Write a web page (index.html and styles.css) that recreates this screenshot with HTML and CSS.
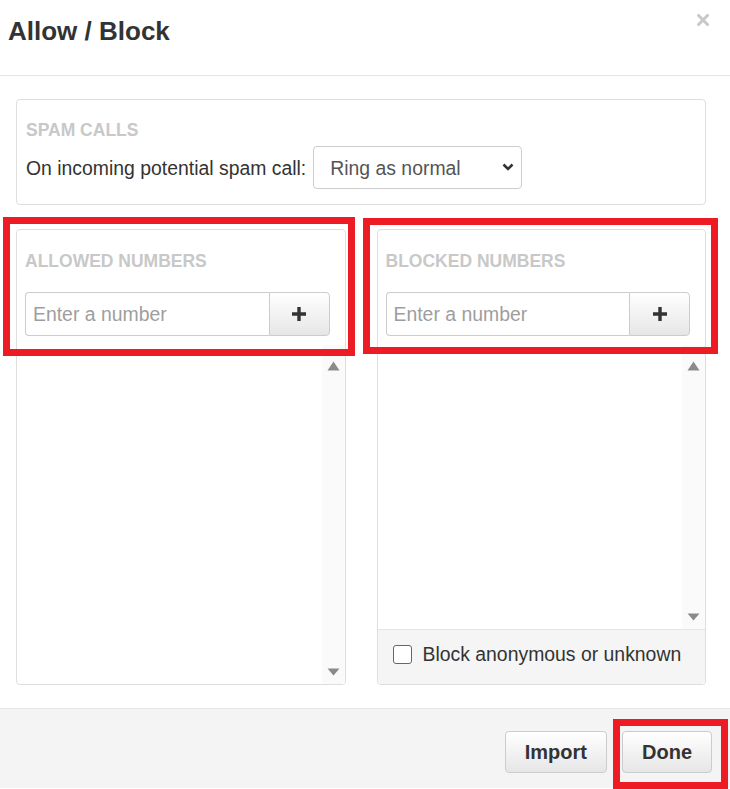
FILE: index.html
```html
<!DOCTYPE html>
<html lang="en">

<head>
    <meta charset="UTF-8">
    <meta name="viewport" content="width=device-width, initial-scale=1">
    <title>Allow / Block</title>
    <link rel="stylesheet" href="styles.css">
</head>

<body>
    <div class="dialog">
        <div class="dialoghead">
            <h2 class="dialogtitle">Allow / Block</h2>
            <button class="closebtn" type="button" aria-label="Close">
                <svg width="12" height="12" viewBox="0 0 12 12">
                    <path d="M1.5 1.5 L10.5 10.5 M10.5 1.5 L1.5 10.5" stroke="#c9c9c9" stroke-width="3" stroke-linecap="square" />
                </svg>
            </button>
        </div>

        <div class="dialogbody">
            <section class="box spambox">
                <h3 class="boxlabel">SPAM CALLS</h3>
                <div class="spamrow">
                    <label for="spamaction">On incoming potential spam call:</label>
                    <div class="selectwrap">
                        <select id="spamaction">
                            <option>Ring as normal</option>
                            <option>Send to voicemail</option>
                            <option>Block</option>
                        </select>
                        <svg class="chevron" width="12" height="8" viewBox="0 0 12 8">
                            <path d="M1.5 1.5 L6 6 L10.5 1.5" fill="none" stroke="#333" stroke-width="2.6" />
                        </svg>
                    </div>
                </div>
            </section>

            <div class="lists">
                <section class="box listbox">
                    <div class="listhead">
                        <h3 class="boxlabel">ALLOWED NUMBERS</h3>
                        <form class="addgroup" action="javascript:;">
                            <input type="text" placeholder="Enter a number" name="number">
                            <button type="submit" class="addbtn" aria-label="Add">
                                <svg width="16" height="16" viewBox="0 0 16 16">
                                    <path d="M8 1 V15 M1 8 H15" stroke="#333" stroke-width="3.4" />
                                </svg>
                            </button>
                        </form>
                    </div>
                    <div class="numberlist">
                        <div class="listitems"></div>
                        <div class="scrolltrack">
                            <svg width="13" height="10" viewBox="0 0 13 10"><path d="M6.5 0.5 L12.5 9.5 H0.5 Z" fill="#8a8a8a" /></svg>
                            <svg width="13" height="8" viewBox="0 0 13 8"><path d="M0.5 0.5 H12.5 L6.5 7.5 Z" fill="#8a8a8a" /></svg>
                        </div>
                    </div>
                </section>

                <section class="box listbox">
                    <div class="listhead">
                        <h3 class="boxlabel">BLOCKED NUMBERS</h3>
                        <form class="addgroup" action="javascript:;">
                            <input type="text" placeholder="Enter a number" name="number">
                            <button type="submit" class="addbtn" aria-label="Add">
                                <svg width="16" height="16" viewBox="0 0 16 16">
                                    <path d="M8 1 V15 M1 8 H15" stroke="#333" stroke-width="3.4" />
                                </svg>
                            </button>
                        </form>
                    </div>
                    <div class="numberlist">
                        <div class="listitems"></div>
                        <div class="scrolltrack">
                            <svg width="13" height="10" viewBox="0 0 13 10"><path d="M6.5 0.5 L12.5 9.5 H0.5 Z" fill="#8a8a8a" /></svg>
                            <svg width="13" height="8" viewBox="0 0 13 8"><path d="M0.5 0.5 H12.5 L6.5 7.5 Z" fill="#8a8a8a" /></svg>
                        </div>
                    </div>
                    <label class="listfoot">
                        <input type="checkbox" class="check">
                        <span>Block anonymous or unknown</span>
                    </label>
                </section>
            </div>
        </div>

        <div class="dialogfoot">
            <button type="button" class="btn">Import</button>
            <button type="button" class="btn">Done</button>
        </div>
    </div>

    <div class="marker marker-allowed"></div>
    <div class="marker marker-blocked"></div>
    <div class="marker marker-done"></div>
</body>

</html>
```

FILE: styles.css
```css
body {
    margin: 0;
    background-color: #fff;
    font-family: 'Liberation Sans', Arial, sans-serif;
    color: #333;
}

.dialoghead {
    display: flex;
    justify-content: space-between;
    align-items: flex-start;
    height: 59px;
    padding: 16px 21px 0 8px;
    border-bottom: 1px solid #e5e5e5;
}

.dialogtitle {
    margin: 0;
    font-size: 26px;
    line-height: 30px;
    font-weight: bold;
    color: #333;
}

.closebtn {
    background: none;
    border: 0;
    padding: 0;
    margin-top: -2px;
    cursor: pointer;
}

.closebtn svg {
    display: block;
}

.dialogbody {
    padding: 23px 24px 23px 16px;
}

.box {
    border: 1px solid #dedede;
    border-radius: 4px;
    box-sizing: border-box;
}

.boxlabel {
    margin: 0;
    font-size: 17.5px;
    line-height: 20px;
    font-weight: bold;
    color: #c8c8c8;
}

.spambox {
    height: 106px;
    padding: 20px 9px 15px;
    margin-bottom: 24px;
}

.spamrow {
    display: flex;
    align-items: center;
    margin-top: 6px;
    font-size: 19.4px;
    line-height: 22px;
}

.spamrow label {
    margin-right: 7px;
}

.selectwrap {
    position: relative;
}

.selectwrap select {
    display: block;
    width: 209px;
    height: 43px;
    padding: 0 30px 0 16px;
    font-family: inherit;
    font-size: 19.4px;
    color: #555;
    background-color: #fff;
    border: 1px solid #ccc;
    border-radius: 4px;
    appearance: none;
    -webkit-appearance: none;
}

.chevron {
    position: absolute;
    right: 8px;
    top: 17px;
}

.lists {
    display: grid;
    grid-template-columns: 1fr 1fr;
    column-gap: 31px;
    height: 456px;
}

.listbox {
    display: flex;
    flex-direction: column;
    overflow: hidden;
}

.listhead {
    padding: 21px 15px 9px 8px;
}

.addgroup {
    display: flex;
    margin: 21px 0 0;
    height: 44px;
}

.addgroup input {
    flex: 1;
    min-width: 0;
    margin: 0;
    padding: 0 7px;
    font-family: inherit;
    font-size: 19.4px;
    color: #555;
    border: 1px solid #ccc;
    border-right: 0;
    border-radius: 4px 0 0 4px;
    outline: none;
}

.addgroup input::placeholder {
    color: #9e9e9e;
}

.addbtn {
    width: 61px;
    display: flex;
    align-items: center;
    justify-content: center;
    padding: 0;
    border: 1px solid #ccc;
    border-radius: 0 4px 4px 0;
    background: linear-gradient(#fff, #e6e6e6);
    cursor: pointer;
}

.numberlist {
    flex: 1;
    display: flex;
}

.listitems {
    flex: 1;
}

.scrolltrack {
    width: 23px;
    background-color: #fafafa;
    display: flex;
    flex-direction: column;
    justify-content: space-between;
    align-items: center;
    padding: 16px 0 8px;
    box-sizing: border-box;
}

.scrolltrack svg {
    display: block;
}

.listfoot {
    display: flex;
    align-items: center;
    height: 55px;
    box-sizing: border-box;
    padding: 0 15px 6px;
    border-top: 1px solid #e5e5e5;
    background-color: #f5f5f5;
    font-size: 19.4px;
    color: #333;
}

.check {
    width: 19px;
    height: 19px;
    margin: 0 11px 0 0;
    border: 1px solid #666;
    border-radius: 3px;
    background-color: #fff;
    appearance: none;
    -webkit-appearance: none;
}

.dialogfoot {
    display: flex;
    justify-content: flex-end;
    gap: 15px;
    height: 80px;
    box-sizing: border-box;
    padding: 22px 18px 0;
    border-top: 1px solid #e5e5e5;
    background-color: #f4f4f4;
}

.btn {
    height: 42px;
    padding: 0 19px;
    font-family: inherit;
    font-size: 20px;
    font-weight: bold;
    color: #333;
    border: 1px solid #ccc;
    border-radius: 4px;
    background: linear-gradient(#fff, #e6e6e6);
    cursor: pointer;
}

/* red highlight frames drawn on top of the dialog */
.marker {
    position: absolute;
    border: 7px solid #ed1c24;
    box-sizing: border-box;
    pointer-events: none;
}

.marker-allowed {
    left: 3px;
    top: 217px;
    width: 352px;
    height: 139px;
}

.marker-blocked {
    left: 363px;
    top: 218px;
    width: 355px;
    height: 136px;
}

.marker-done {
    left: 613px;
    top: 719px;
    width: 115px;
    height: 70px;
}
```
